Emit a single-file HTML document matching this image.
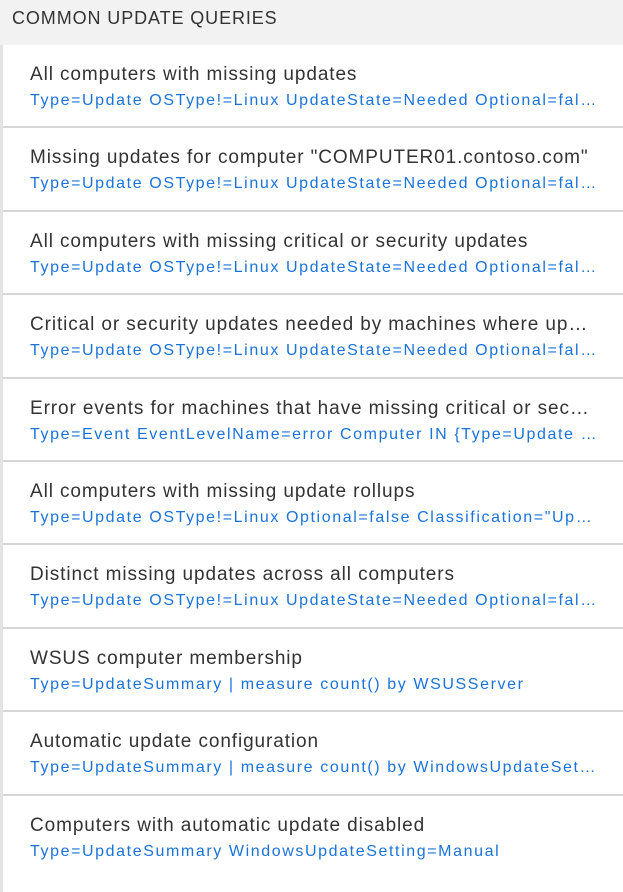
<!DOCTYPE html>
<html><head><meta charset="utf-8"><style>
*{margin:0;padding:0;box-sizing:border-box}
body{width:623px;height:892px;background:#fff;font-family:"Liberation Sans",sans-serif;overflow:hidden}
.hdr{height:45px;background:#f2f2f2;color:#333;font-size:18px;padding:8px 0 0 12px;letter-spacing:0.9px}
.list{border-left:3px solid #e3e3e3;height:847px}
.item{height:83.4px;border-bottom:2px solid #d6d6d6;padding:18px 0 0 27px}
.item:last-child{border-bottom:none}
.t{font-size:19px;color:#333;white-space:nowrap;overflow:hidden;text-overflow:ellipsis;width:568px;letter-spacing:0.9px;line-height:23px}
.q{font-size:16px;color:#1a73d9;white-space:nowrap;overflow:hidden;text-overflow:ellipsis;width:568px;line-height:20px;margin-top:5px;letter-spacing:1.6px}
</style></head><body>
<div class="hdr">COMMON UPDATE QUERIES</div>
<div class="list">
<div class="item"><div class="t">All computers with missing updates</div><div class="q">Type=Update OSType!=Linux UpdateState=Needed Optional=false</div></div>
<div class="item"><div class="t">Missing updates for computer "COMPUTER01.contoso.com"</div><div class="q">Type=Update OSType!=Linux UpdateState=Needed Optional=false</div></div>
<div class="item"><div class="t">All computers with missing critical or security updates</div><div class="q">Type=Update OSType!=Linux UpdateState=Needed Optional=false</div></div>
<div class="item"><div class="t">Critical or security updates needed by machines where updates</div><div class="q">Type=Update OSType!=Linux UpdateState=Needed Optional=false</div></div>
<div class="item"><div class="t">Error events for machines that have missing critical or security</div><div class="q">Type=Event EventLevelName=error Computer IN {Type=Update (Classification</div></div>
<div class="item"><div class="t">All computers with missing update rollups</div><div class="q">Type=Update OSType!=Linux Optional=false Classification="Update Rollups"</div></div>
<div class="item"><div class="t">Distinct missing updates across all computers</div><div class="q">Type=Update OSType!=Linux UpdateState=Needed Optional=false</div></div>
<div class="item"><div class="t">WSUS computer membership</div><div class="q">Type=UpdateSummary | measure count() by WSUSServer</div></div>
<div class="item"><div class="t">Automatic update configuration</div><div class="q">Type=UpdateSummary | measure count() by WindowsUpdateSetting</div></div>
<div class="item"><div class="t">Computers with automatic update disabled</div><div class="q">Type=UpdateSummary WindowsUpdateSetting=Manual</div></div>
</div>
</body></html>
